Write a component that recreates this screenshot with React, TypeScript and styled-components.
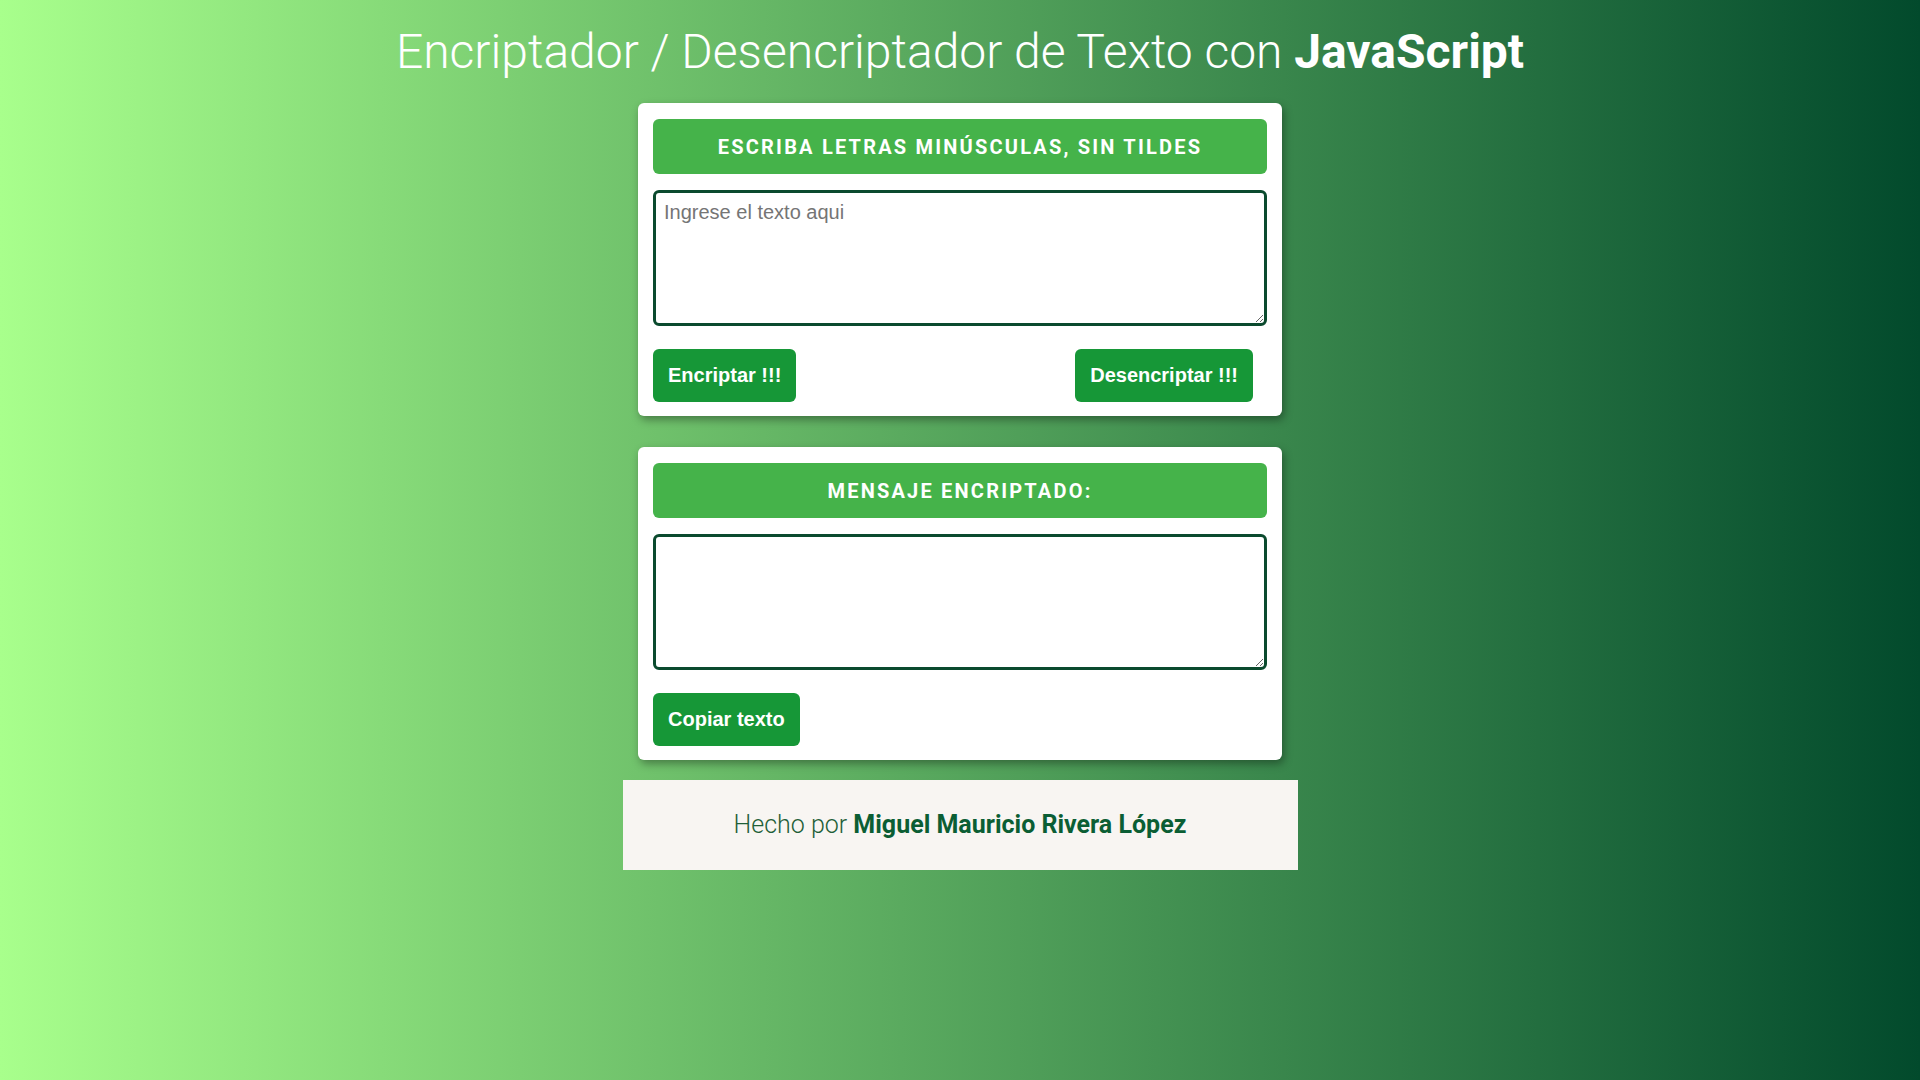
import React, { useState } from "react";
import styled, { createGlobalStyle } from "styled-components";

const GlobalStyle = createGlobalStyle`
  html, body {
    margin: 0;
    padding: 0;
  }
  body {
    min-height: 100vh;
    background: linear-gradient(to right, #a8ff8c, #024a2c);
    font-family: "Liberation Sans", Arial, sans-serif;
  }
`;

const encriptar = (texto: string) =>
  texto
    .replace(/e/g, "enter")
    .replace(/i/g, "imes")
    .replace(/a/g, "ai")
    .replace(/o/g, "ober")
    .replace(/u/g, "ufat");

const desencriptar = (texto: string) =>
  texto
    .replace(/enter/g, "e")
    .replace(/imes/g, "i")
    .replace(/ai/g, "a")
    .replace(/ober/g, "o")
    .replace(/ufat/g, "u");

const App = () => {
  const [entrada, setEntrada] = useState("");
  const [salida, setSalida] = useState("");

  return (
    <Page>
      <GlobalStyle />
      <Title>
        Encriptador / Desencriptador de Texto con <strong>JavaScript</strong>
      </Title>

      <Card>
        <Header>Escriba letras minúsculas, sin tildes</Header>
        <TextArea
          placeholder="Ingrese el texto aqui"
          value={entrada}
          onChange={(e) => setEntrada(e.target.value)}
        />
        <Actions>
          <Button onClick={() => setSalida(encriptar(entrada))}>Encriptar !!!</Button>
          <Button $right onClick={() => setSalida(desencriptar(entrada))}>
            Desencriptar !!!
          </Button>
        </Actions>
      </Card>

      <Card>
        <Header>Mensaje encriptado:</Header>
        <TextArea value={salida} onChange={(e) => setSalida(e.target.value)} />
        <Actions>
          <Button onClick={() => navigator.clipboard?.writeText(salida)}>Copiar texto</Button>
        </Actions>
      </Card>

      <Footer>
        Hecho por <strong>Miguel Mauricio Rivera López</strong>
      </Footer>
    </Page>
  );
};

const Page = styled.div`
  display: flex;
  flex-direction: column;
  align-items: center;
  padding-bottom: 40px;
`;

const Title = styled.h1`
  margin: 25px 0 24px;
  font-family: Roboto, "Liberation Sans", sans-serif;
  font-weight: 300;
  font-size: 48px;
  line-height: 54px;
  color: #ffffff;
  text-align: center;

  strong {
    font-weight: 700;
  }
`;

const Card = styled.section`
  box-sizing: border-box;
  width: 644px;
  padding: 16px 15px 14px;
  margin-bottom: 31px;
  background-color: #ffffff;
  border-radius: 6px;
  box-shadow: 2px 4px 8px rgba(0, 0, 0, 0.35);
  display: flex;
  flex-direction: column;

  & + & {
    margin-bottom: 20px;
  }
`;

const Header = styled.h2`
  margin: 0 0 16px;
  height: 55px;
  display: flex;
  align-items: center;
  justify-content: center;
  background-color: #45b34a;
  border-radius: 6px;
  color: #ffffff;
  font-family: Roboto, "Liberation Sans", sans-serif;
  font-weight: 700;
  font-size: 20px;
  letter-spacing: 2.2px;
  text-transform: uppercase;
`;

const TextArea = styled.textarea`
  box-sizing: border-box;
  width: 100%;
  height: 136px;
  margin: 0;
  padding: 8px 8px;
  border: 3px solid #0b4a2e;
  border-radius: 6px;
  font-family: "Liberation Sans", Arial, sans-serif;
  font-size: 20px;
  color: #222222;
  outline: none;

  &::placeholder {
    color: #757575;
  }
`;

const Actions = styled.div`
  display: flex;
  justify-content: space-between;
  margin-top: 23px;
`;

const Button = styled.button<{ $right?: boolean }>`
  height: 53px;
  padding: 0 15px;
  margin-right: ${(p) => (p.$right ? "14px" : "0")};
  border: none;
  border-radius: 6px;
  background-color: #169737;
  color: #ffffff;
  font-family: "Liberation Sans", Arial, sans-serif;
  font-weight: 700;
  font-size: 20px;
  cursor: pointer;
`;

const Footer = styled.footer`
  box-sizing: border-box;
  width: 675px;
  height: 90px;
  line-height: 90px;
  text-align: center;
  background-color: #f8f5f2;
  color: #1f5f38;
  font-family: Roboto, "Liberation Sans", sans-serif;
  font-weight: 300;
  font-size: 25px;

  strong {
    font-weight: 700;
    color: #0b5e34;
  }
`;

export default App;
